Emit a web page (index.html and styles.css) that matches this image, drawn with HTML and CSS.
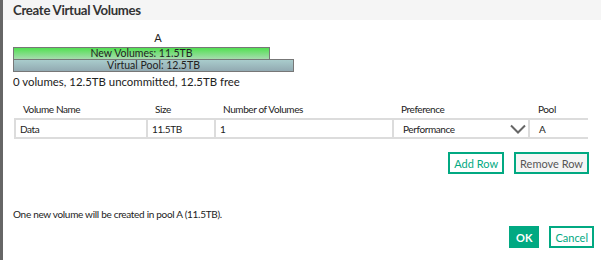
FILE: index.html
```html
<!DOCTYPE html>
<html lang="en">
<head>
    <meta charset="UTF-8">
    <title>Create Virtual Volumes</title>
    <link rel="stylesheet" href="styles.css">
</head>
<body>
<div class="dialog">
    <div class="dialog-header">Create Virtual Volumes</div>

    <div class="dialog-body">
        <div class="pool-chart">
            <div class="pool-name">A</div>
            <div class="bar bar-new">New Volumes: 11.5TB</div>
            <div class="bar bar-pool">Virtual Pool: 12.5TB</div>
        </div>
        <div class="pool-summary">0 volumes, 12.5TB uncommitted, 12.5TB free</div>

        <div class="vol-table">
            <div class="th">Volume Name</div>
            <div class="th">Size</div>
            <div class="th">Number of Volumes</div>
            <div class="th th-pref">Preference</div>
            <div class="th th-pool">Pool</div>

            <div class="td">Data</div>
            <div class="td">11.5TB</div>
            <div class="td">1</div>
            <div class="td td-select">Performance
                <svg class="chevron" width="16" height="10" viewBox="0 0 16 10"><path d="M1 1.5 L8 8.5 L15 1.5" fill="none" stroke="#666" stroke-width="2"/></svg>
            </div>
            <div class="td td-pool">A</div>
        </div>

        <div class="row-actions">
            <button class="btn btn-outline">Add Row</button>
            <button class="btn btn-grey">Remove Row</button>
        </div>

        <div class="result">One new volume will be created in pool A (11.5TB).</div>

        <div class="dialog-footer">
            <button class="btn btn-ok">OK</button>
            <button class="btn btn-outline btn-cancel">Cancel</button>
        </div>
    </div>
</div>
</body>
</html>
```

FILE: styles.css
```css
body {
    margin: 0;
    font-family: Lato, "Open Sans", sans-serif;
    font-size: 11px;
    color: #222;
    background-color: #fff;
}

.dialog {
    border-left: 3px solid #666;
    width: 601px;
    height: 260px;
    box-sizing: border-box;
}

.dialog-header {
    background-color: #f5f5f5;
    height: 20px;
    padding-left: 10px;
    font-family: Lato, "Liberation Sans", sans-serif;
    font-weight: bold;
    font-size: 13.2px;
    letter-spacing: -0.3px;
    line-height: 20px;
    color: #333;
}

.dialog-body {
    padding: 0 0 0 10px;
}

.pool-chart {
    padding-top: 11px;
}

.pool-name {
    width: 290px;
    text-align: center;
    height: 16px;
    line-height: 14px;
}

.bar {
    box-sizing: border-box;
    height: 13px;
    border: 1px solid #777;
    text-align: center;
    font-size: 10.5px;
    line-height: 11px;
    color: #222;
}

.bar-new {
    width: 257px;
    background: linear-gradient(#52e052, #a6dcae);
}

.bar-pool {
    width: 281px;
    margin-top: -1px;
    background: linear-gradient(#a9cccc, #92aab2);
}

.pool-summary {
    margin-top: 2px;
    font-size: 11.4px;
    line-height: 16px;
}

.vol-table {
    display: grid;
    grid-template-columns: 132px 68px 178px 136px 60px;
    margin-top: 12px;
    margin-left: 1px;
    font-size: 10px;
    letter-spacing: -0.4px;
}

.th {
    padding-left: 9px;
    line-height: 14px;
    height: 14px;
    padding-bottom: 2px;
}

.th-pool {
    padding-left: 10px;
}

.td {
    position: relative;
    height: 21px;
    line-height: 18px;
    box-sizing: border-box;
    border: 2px solid #dcdcdc;
    border-right: none;
    padding-left: 4px;
}

.td-select {
    padding-left: 9px;
}

.td-pool {
    padding-left: 9px;
}

.chevron {
    position: absolute;
    right: 2px;
    top: 4px;
}

.row-actions {
    display: flex;
    justify-content: flex-end;
    gap: 10px;
    width: 576px;
    margin-top: 13px;
}

.btn {
    font-family: Lato, "Liberation Sans", sans-serif;
    font-size: 11px;
    height: 22px;
    box-sizing: border-box;
    padding: 0 4px;
    border: 2px solid #01a982;
    border-radius: 0;
    background-color: #fff;
    cursor: pointer;
}

.btn-outline {
    color: #01a982;
}

.btn-grey {
    background-color: #f5f5f5;
    color: #555;
}

.result {
    margin-top: 32px;
    font-size: 10px;
    letter-spacing: -0.3px;
    line-height: 16px;
}

.dialog-footer {
    display: flex;
    justify-content: flex-end;
    gap: 10px;
    width: 581px;
    margin-top: 4px;
}

.btn-ok {
    background-color: #01a982;
    color: #fff;
    font-weight: bold;
    padding: 0 5px;
}

.btn-cancel {
    padding: 0 4px;
}
```
